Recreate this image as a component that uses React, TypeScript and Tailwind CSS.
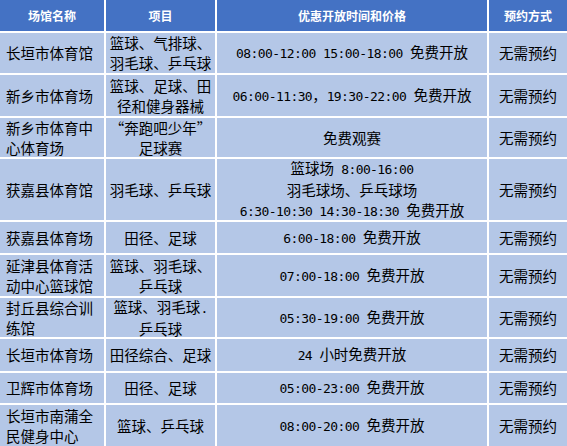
import { Fragment } from 'react'

type Row = {
  name: string[]
  items: string[]
  time: string[]
  book: string
  h: string
}

const rows: Row[] = [
  { name: ['长垣市体育馆'], items: ['篮球、气排球、', '羽毛球、乒乓球'], time: ['08:00-12:00 15:00-18:00 免费开放'], book: '无需预约', h: '40px' },
  { name: ['新乡市体育场'], items: ['篮球、足球、田', '径和健身器械'], time: ['06:00-11:30，19:30-22:00 免费开放'], book: '无需预约', h: '41px' },
  { name: ['新乡市体育中', '心体育场'], items: ['“奔跑吧少年”', '足球赛'], time: ['免费观赛'], book: '无需预约', h: '39px' },
  { name: ['获嘉县体育馆'], items: ['羽毛球、乒乓球'], time: ['篮球场 8:00-16:00', '羽毛球场、乒乓球场', '6:30-10:30 14:30-18:30 免费开放'], book: '无需预约', h: '61px' },
  { name: ['获嘉县体育场'], items: ['田径、足球'], time: ['6:00-18:00 免费开放'], book: '无需预约', h: '31px' },
  { name: ['延津县体育活', '动中心篮球馆'], items: ['篮球、羽毛球、', '乒乓球'], time: ['07:00-18:00 免费开放'], book: '无需预约', h: '41px' },
  { name: ['封丘县综合训', '练馆'], items: ['篮球、羽毛球.', '乒乓球'], time: ['05:30-19:00 免费开放'], book: '无需预约', h: '39px' },
  { name: ['长垣市体育场'], items: ['田径综合、足球'], time: ['24 小时免费开放'], book: '无需预约', h: '32px' },
  { name: ['卫辉市体育场'], items: ['田径、足球'], time: ['05:00-23:00 免费开放'], book: '无需预约', h: '30px' },
  { name: ['长垣市南蒲全', '民健身中心'], items: ['篮球、乒乓球'], time: ['08:00-20:00 免费开放'], book: '无需预约', h: '41px' },
]

// half-width latin runs like the bitmap song font in the original
function Runs({ text }: { text: string }) {
  const parts = text.split(/([\x20-\x7e]+)/).filter(Boolean)
  return (
    <>
      {parts.map((p, i) =>
        /^[\x20-\x7e]+$/.test(p) ? (
          <span key={i} className="font-['DejaVu_Sans_Mono',monospace] text-[13px] tracking-[-0.58px] whitespace-pre">
            {p}
          </span>
        ) : (
          <span key={i}>{p}</span>
        )
      )}
    </>
  )
}

function Lines({ lines }: { lines: string[] }) {
  return (
    <div>
      {lines.map((l, i) => (
        <div key={i} className="whitespace-nowrap">
          <Runs text={l} />
        </div>
      ))}
    </div>
  )
}

export default function App() {
  const cell = "bg-[#b4c7e7] flex items-center text-black text-[14.5px] leading-[20px]"
  const head = "bg-[#4472c4] flex items-center justify-center text-white text-[12px] font-bold"

  return (
    <div className="w-[567px] h-[446px] overflow-hidden bg-white font-['Noto_Sans_CJK_SC',sans-serif]">
      <div className="grid grid-cols-[104px_109px_270px_78px] gap-[2px] bg-white">
        {/* Header */}
        <div className={`${head} h-[31px]`}>场馆名称</div>
        <div className={`${head} h-[31px]`}>项目</div>
        <div className={`${head} h-[31px]`}>优惠开放时间和价格</div>
        <div className={`${head} h-[31px]`}>预约方式</div>

        {rows.map((r, i) => (
          <Fragment key={i}>
            <div className={`${cell} pl-[6px]`} style={{ height: r.h }}>
              <Lines lines={r.name} />
            </div>
            <div className={`${cell} justify-center text-center`} style={{ height: r.h }}>
              <Lines lines={r.items} />
            </div>
            <div className={`${cell} justify-center text-center`} style={{ height: r.h }}>
              <Lines lines={r.time} />
            </div>
            <div className={`${cell} justify-center`} style={{ height: r.h }}>
              {r.book}
            </div>
          </Fragment>
        ))}
      </div>
    </div>
  )
}
